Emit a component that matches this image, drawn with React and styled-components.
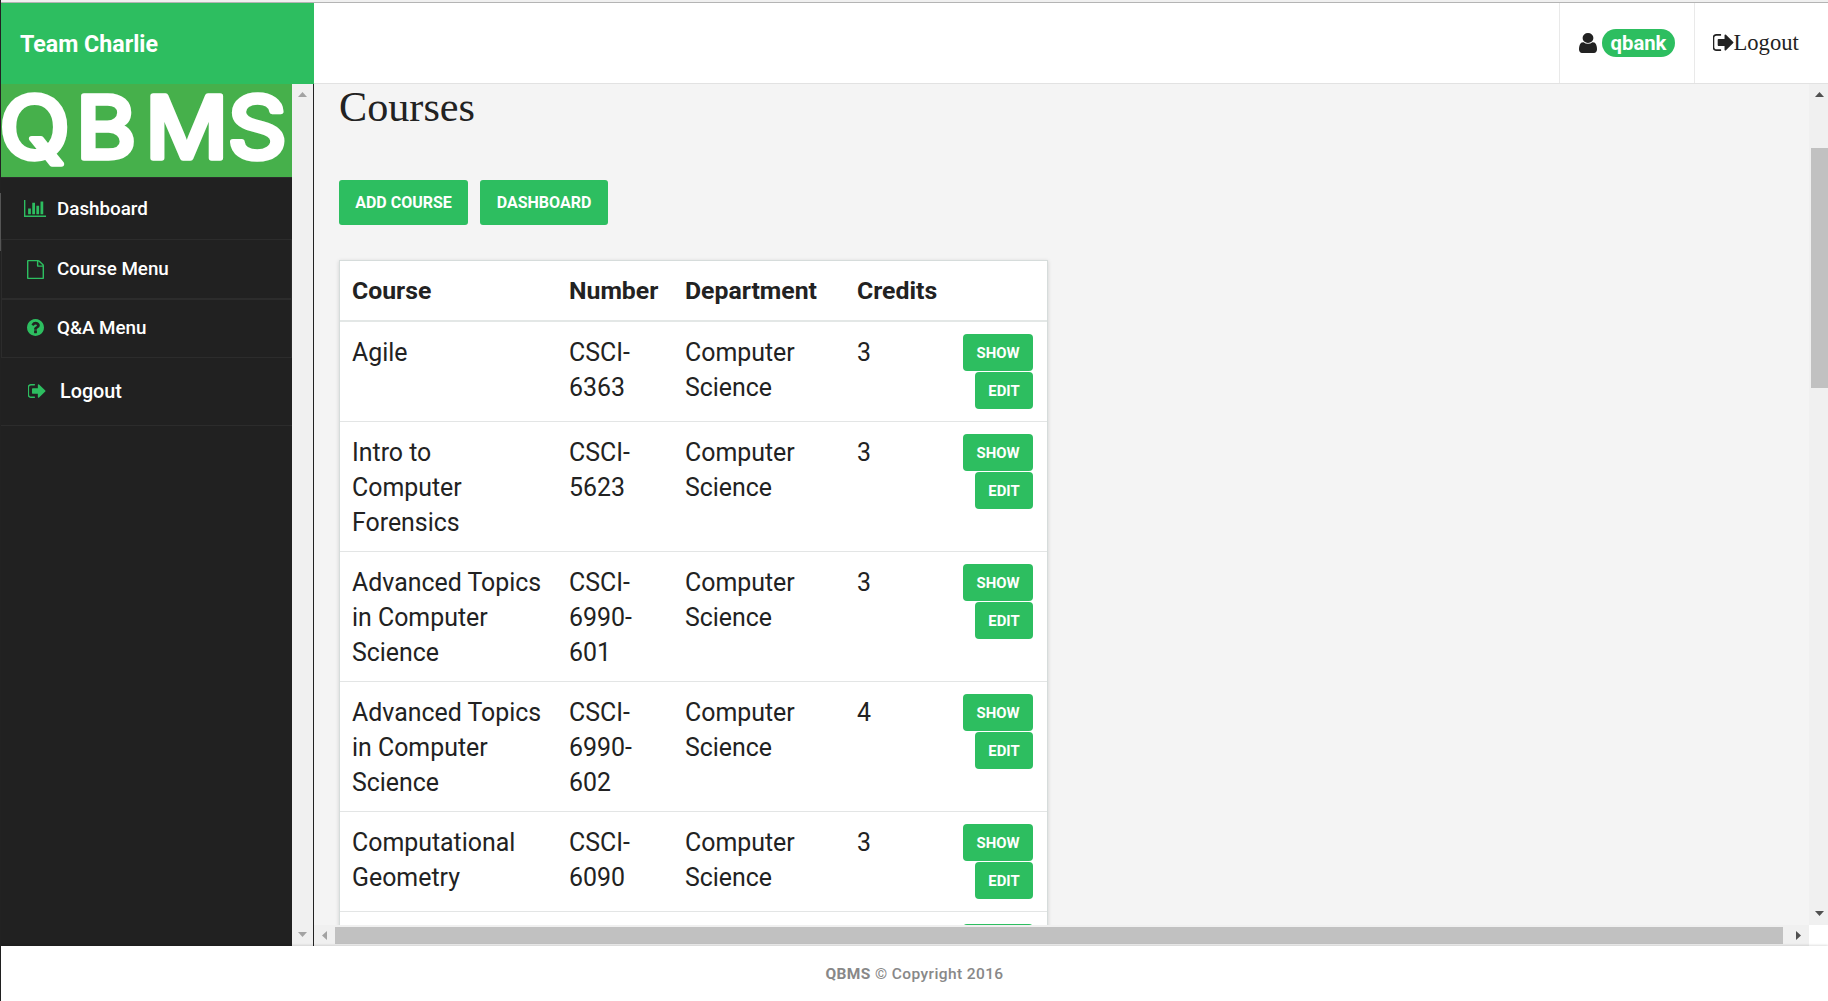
import React from "react";
import styled, { createGlobalStyle } from "styled-components";

const GREEN = "#2dbe60";
const INK = "#222222";

const GlobalStyle = createGlobalStyle`
  * { box-sizing: border-box; }
  body { margin: 0; background: #fff; overflow: hidden; }
`;

const Page = styled.div`
  display: grid;
  grid-template-columns: 1px 1fr;
  width: 1828px;
  height: 1001px;
  font-family: Roboto, "Liberation Sans", sans-serif;
  color: ${INK};
`;

const WindowEdge = styled.div`
  background: linear-gradient(#222 0 193px, #555 193px 251px, #222 251px);
`;

const Frame = styled.div`
  display: grid;
  grid-template-rows: 3px 81px 862px 55px;
  min-width: 0;
`;

const TopRule = styled.div`
  background: #f0f0f0;
  border-bottom: 1px solid #b4b4b4;
`;

const Header = styled.header`
  display: flex;
`;

const Brand = styled.div`
  display: flex;
  align-items: center;
  width: 313px;
  padding: 0 0 0 19px;
  background: ${GREEN};
  color: #fff;
  font-size: 23.2px;
  font-weight: 700;
`;

const HeaderBar = styled.div`
  flex: 1;
  display: flex;
  justify-content: flex-end;
  border-bottom: 1px solid #e2e2e2;
`;

const HeaderItem = styled.div`
  display: flex;
  align-items: center;
  width: ${(p) => p.$width}px;
  padding: 0 0 1px ${(p) => p.$pad}px;
  border-left: 1px solid #e9e9e9;
  font-family: "Liberation Serif", serif;
  font-size: 22.6px;
`;

const Badge = styled.span`
  display: flex;
  align-items: center;
  justify-content: center;
  width: 73px;
  height: 28px;
  margin: 1px 0 0 5px;
  border-radius: 14px;
  background: ${GREEN};
  color: #fff;
  font: 700 20.3px Roboto, sans-serif;
`;

const Body = styled.div`
  display: flex;
  min-height: 0;
`;

const Sidebar = styled.nav`
  width: 291px;
  background: #212121;
`;

const Logo = styled.svg`
  display: block;
  width: 291px;
  height: 93px;
  overflow: visible;
  background: #46b04b;
`;

const MenuItem = styled.a`
  display: flex;
  align-items: center;
  height: ${(p) => p.$height}px;
  padding-left: ${(p) => p.$pad}px;
  padding-bottom: ${(p) => p.$lift || 0}px;
  border: solid #2c2c2c;
  border-width: ${(p) => p.$border};
  color: #fff;
  font-size: ${(p) => p.$size || 18.8}px;
  font-weight: 500;
`;

const MenuIcon = styled.span`
  display: flex;
  justify-content: center;
  width: 22px;
  margin-right: ${(p) => p.$gap}px;
  color: ${GREEN};
`;

const ScrollTrack = styled.div`
  display: flex;
  flex-direction: ${(p) => (p.$horizontal ? "row" : "column")};
  justify-content: space-between;
  align-items: center;
  width: ${(p) => p.$width};
  height: ${(p) => p.$height};
  padding: ${(p) => p.$padding || 0};
  background: #f0f0f0;
`;

const Thumb = styled.div`
  width: ${(p) => p.$width}px;
  height: ${(p) => p.$height}px;
  margin: ${(p) => p.$margin};
  background: #c1c1c1;
`;

const Main = styled.main`
  flex: 1;
  display: grid;
  grid-template-columns: 1fr 19px;
  grid-template-rows: 841px 21px;
  min-width: 0;
  border-left: 1px solid #222;
`;

const Content = styled.section`
  overflow: hidden;
  padding-left: 25px;
  background: #f4f4f4;
`;

const Title = styled.h1`
  margin: 0;
  height: 96px;
  font: 400 42.2px/46px "Liberation Serif", serif;
`;

const Actions = styled.div`
  display: flex;
  gap: 12px;
  margin-bottom: 35px;
`;

const Button = styled.button`
  width: ${(p) => p.$width}px;
  height: ${(p) => (p.$small ? 37 : 45)}px;
  padding: 0;
  border: 0;
  border-radius: ${(p) => (p.$small ? 4 : 3)}px;
  background: ${GREEN};
  color: #fff;
  font: ${(p) => (p.$small ? "700 14.9px" : "700 16px")} Roboto, sans-serif;
  text-transform: uppercase;
`;

const Table = styled.table`
  width: 709px;
  table-layout: fixed;
  border-collapse: separate;
  border-spacing: 0;
  border: 1px solid #d6dcdb;
  background: #fff;
  box-shadow: 0 1px 4px rgba(0, 0, 0, 0.15);
  font-size: 24.9px;
  line-height: 35px;
`;

const Th = styled.th`
  height: 61px;
  padding: 0 0 0 12px;
  border-bottom: 2px solid #e3e7e6;
  text-align: left;
  font-size: 24.8px;
  font-weight: 700;
`;

const Td = styled.td`
  height: ${(p) => p.$height}px;
  padding: ${(p) => (p.$actions ? 12 : 13)}px 0 0 12px;
  border-bottom: 1px solid #e3e5e5;
  vertical-align: top;
  white-space: pre;
`;

const RowButtons = styled.div`
  display: flex;
  flex-direction: column;
  align-items: flex-end;
  gap: 1px;
  padding-right: 14px;
`;

const Footer = styled.footer`
  display: flex;
  justify-content: center;
  padding-top: 18px;
  box-shadow: 0 -1px 2px rgba(0, 0, 0, 0.12);
  background: #fff;
  color: #888;
  font-size: 15.5px;
  font-weight: 500;
  line-height: 20px;
  letter-spacing: 0.4px;
  white-space: pre;
  b { font-weight: 700; }
`;

const GLYPHS = {
  chart: ["0 128 2048 1536", "M640 896v512h-256v-512h256zm384-512v1024h-256v-1024h256zm1024 1152v128h-2048v-1536h128v1408h1920zm-640-896v768h-256v-768h256zm384-384v1152h-256v-1152h256z"],
  file: ["128 0 1536 1792", "M1596 380q28 28 48 76t20 88v1152q0 40-28 68t-68 28h-1344q-40 0-68-28t-28-68v-1600q0-40 28-68t68-28h896q40 0 88 20t76 48zm-444-244v376h376q-10-29-22-41l-313-313q-12-12-41-22zm384 1528v-1024h-416q-40 0-68-28t-28-68v-416h-768v1536h1280z"],
  help: ["128 128 1536 1536", "M1024 1376v-192q0-14-9-23t-23-9h-192q-14 0-23 9t-9 23v192q0 14 9 23t23 9h192q14 0 23-9t9-23zm256-672q0-88-55.5-163t-138.5-116-170-41q-243 0-371 213-15 24 8 42l132 100q7 6 19 6 16 0 25-12 53-68 86-92 34-24 86-24 48 0 85.5 26t37.5 59q0 38-20 61t-68 45q-63 28-115.5 86.5t-52.5 125.5v36q0 14 9 23t23 9h192q14 0 23-9t9-23q0-19 21.5-49.5t54.5-49.5q32-18 49-28.5t46-35 44.5-48 28-60.5 12.5-81zm384 192q0 209-103 385.5t-279.5 279.5-385.5 103-385.5-103-279.5-279.5-103-385.5 103-385.5 279.5-279.5 385.5-103 385.5 103 279.5 279.5 103 385.5z"],
  exit: ["96 256 1536 1280", "M704 1440q0 4 1 20t.5 26.5-3 23.5-10 19.5-20.5 6.5h-320q-119 0-203.5-84.5t-84.5-203.5v-704q0-119 84.5-203.5t203.5-84.5h320q13 0 22.5 9.5t9.5 22.5q0 4 1 20t.5 26.5-3 23.5-10 19.5-20.5 6.5h-320q-66 0-113 47t-47 113v704q0 66 47 113t113 47h312l11.5 1 11.5 3 8 5.5 7 9 2 13.5zm928-544q0 26-19 45l-544 544q-19 19-45 19t-45-19-19-45v-288h-448q-26 0-45-19t-19-45v-384q0-26 19-45t45-19h448v-288q0-26 19-45t45-19 45 19l544 544q19 19 19 45z"],
  user: ["256 128 1280 1536", "M1536 1399q0 109-62.5 187t-150.5 78h-854q-88 0-150.5-78t-62.5-187q0-85 8.5-160.5t31.5-152 58.5-131 94-89 134.5-34.5q131 128 313 128t313-128q76 0 134.5 34.5t94 89 58.5 131 31.5 152 8.5 160.5zm-256-887q0 159-112.5 271.5t-271.5 112.5-271.5-112.5-112.5-271.5 112.5-271.5 271.5-112.5 271.5 112.5 112.5 271.5z"],
};

const Icon = ({ name, width, height }) => (
  <svg width={width} height={height} viewBox={GLYPHS[name][0]} preserveAspectRatio="none" fill="currentColor">
    <path d={GLYPHS[name][1]} />
  </svg>
);

const ARROWS = {
  up: [9, 5, "M4.5 0L9 5H0z"],
  down: [9, 5, "M0 0H9L4.5 5z"],
  left: [5, 9, "M5 0V9L0 4.5z"],
  right: [5, 9, "M0 0L5 4.5L0 9z"],
};

const Arrow = ({ dir, color = "#505050" }) => {
  const [w, h, d] = ARROWS[dir];
  return (
    <svg width={w} height={h} fill={color}>
      <path d={d} />
    </svg>
  );
};

const COLUMNS = [217, 116, 172, 100, 102];
const CS = "Computer\nScience";
const COURSES = [
  ["Agile", "CSCI-\n6363", "3", 100],
  ["Intro to\nComputer\nForensics", "CSCI-\n5623", "3", 130],
  ["Advanced Topics\nin Computer\nScience", "CSCI-\n6990-\n601", "3", 130],
  ["Advanced Topics\nin Computer\nScience", "CSCI-\n6990-\n602", "4", 130],
  ["Computational\nGeometry", "CSCI-\n6090", "3", 100],
  ["", "", "", 100],
];

export default function App() {
  return (
    <Page>
      <GlobalStyle />
      <WindowEdge />
      <Frame>
        <TopRule />
        <Header>
          <Brand>Team Charlie</Brand>
          <HeaderBar>
            <HeaderItem $width={135} $pad={19}>
              <Icon name="user" width={18} height={20} />
              <Badge>qbank</Badge>
            </HeaderItem>
            <HeaderItem $width={134} $pad={18}>
              <Icon name="exit" width={20.5} height={17} />
              <span>Logout</span>
            </HeaderItem>
          </HeaderBar>
        </Header>
        <Body>
          <Sidebar>
            <Logo viewBox="0 0 291 93">
              <text
                x="-1.5 69.5 133.5 210"
                y="74"
                transform="scale(1.08 1)"
                fontFamily="Inter, Liberation Sans, sans-serif"
                fontSize="85"
                fontWeight="400"
                fill="#fff"
                stroke="#fff"
                strokeWidth="5.5"
                strokeLinejoin="round"
              >
                QBMS
              </text>
            </Logo>
            <MenuItem $height={62} $pad={23} $border="1px 0 0">
              <MenuIcon $gap={11}><Icon name="chart" width={22} height={17} /></MenuIcon>
              Dashboard
            </MenuItem>
            <MenuItem $height={60} $pad={22} $border="1px">
              <MenuIcon $gap={11}><Icon name="file" width={17} height={19} /></MenuIcon>
              Course Menu
            </MenuItem>
            <MenuItem $height={59} $pad={22} $border="1px" $lift={2}>
              <MenuIcon $gap={11}><Icon name="help" width={17} height={17} /></MenuIcon>
              Q&amp;A Menu
            </MenuItem>
            <MenuItem $height={68} $pad={25} $border="0 0 1px" $size={19.8} $lift={1}>
              <MenuIcon $gap={12}><Icon name="exit" width={17.5} height={14} /></MenuIcon>
              Logout
            </MenuItem>
          </Sidebar>
          <ScrollTrack $width="21px" $height="862px" $padding="8px 0 9px">
            <Arrow dir="up" color="#a3a3a3" />
            <Arrow dir="down" color="#a3a3a3" />
          </ScrollTrack>
          <Main>
            <Content>
              <Title>Courses</Title>
              <Actions>
                <Button $width={129}>Add Course</Button>
                <Button $width={128}>Dashboard</Button>
              </Actions>
              <Table>
                <colgroup>
                  {COLUMNS.map((w, i) => <col key={i} width={w} />)}
                </colgroup>
                <thead>
                  <tr>
                    <Th>Course</Th>
                    <Th>Number</Th>
                    <Th>Department</Th>
                    <Th>Credits</Th>
                    <Th />
                  </tr>
                </thead>
                <tbody>
                  {COURSES.map(([name, number, credits, height], i) => (
                    <tr key={i}>
                      <Td $height={height}>{name}</Td>
                      <Td $height={height}>{number}</Td>
                      <Td $height={height}>{name && CS}</Td>
                      <Td $height={height}>{credits}</Td>
                      <Td $height={height} $actions>
                        <RowButtons>
                          <Button $small $width={70}>{name && "Show"}</Button>
                          {name && <Button $small $width={58}>Edit</Button>}
                        </RowButtons>
                      </Td>
                    </tr>
                  ))}
                </tbody>
              </Table>
            </Content>
            <ScrollTrack $width="19px" $height="841px" $padding="8px 0 9px 2px">
              <Arrow dir="up" />
              <Thumb $width={17} $height={240} $margin="51px 0 auto" />
              <Arrow dir="down" />
            </ScrollTrack>
            <ScrollTrack $horizontal $width="1495px" $height="21px" $padding="0 8px 0 8px">
              <Arrow dir="left" color="#a3a3a3" />
              <Thumb $width={1448} $height={17} $margin="0 auto 0 8px" />
              <Arrow dir="right" />
            </ScrollTrack>
          </Main>
        </Body>
        <Footer><b>QBMS</b> © Copyright 2016</Footer>
      </Frame>
    </Page>
  );
}
